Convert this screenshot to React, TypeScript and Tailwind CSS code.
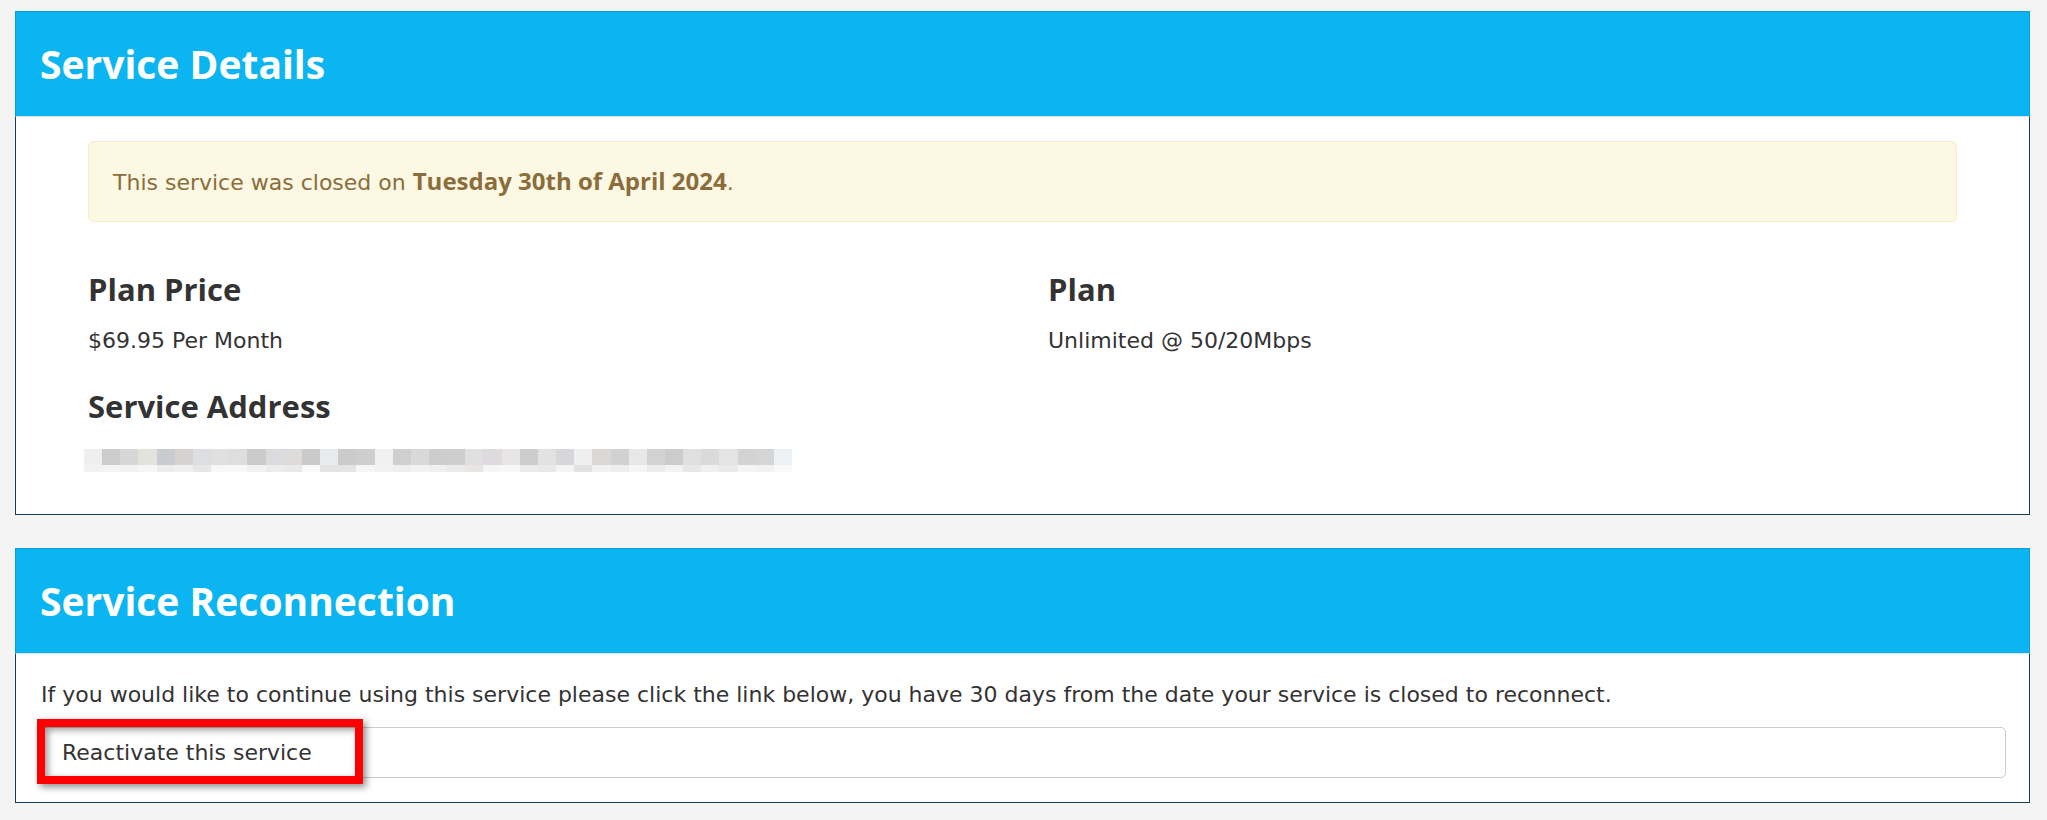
import React from 'react';

const blurTop = [
  'bg-[#efefef]', 'bg-[#cdcdcd]', 'bg-[#d6d6d6]', 'bg-[#e3e2dd]', 'bg-[#c8ccd0]', 'bg-[#d4d3d1]',
  'bg-[#dcdee1]', 'bg-[#e0e0e0]', 'bg-[#dedede]', 'bg-[#cbcbcb]', 'bg-[#d9dbdf]', 'bg-[#dedcda]',
  'bg-[#cacaca]', 'bg-[#e9eaec]', 'bg-[#cbcbcb]', 'bg-[#cecece]', 'bg-[#f0f0f0]', 'bg-[#cfcfcf]',
  'bg-[#d9d9d9]', 'bg-[#cecdce]', 'bg-[#cecece]', 'bg-[#dfe0df]', 'bg-[#dddbde]', 'bg-[#e7e6e4]',
  'bg-[#cdcdcd]', 'bg-[#e2e2e2]', 'bg-[#d7d6da]', 'bg-[#efefef]', 'bg-[#dad9d7]', 'bg-[#d1d1d1]',
  'bg-[#e8e8e8]', 'bg-[#d2d2d2]', 'bg-[#cccccc]', 'bg-[#e0e0e0]', 'bg-[#dadada]', 'bg-[#e4e4e4]',
  'bg-[#d3d3d3]', 'bg-[#d5d5d5]', 'bg-[#eef1f4]',
];

const blurBottom = [
  'bg-[#f2f2f2]', 'bg-[#f4f4f4]', 'bg-[#f3f3f3]', 'bg-[#f6f6f6]', 'bg-[#ededed]', 'bg-[#f0f0f0]',
  'bg-[#e6e6e6]', 'bg-[#f7f7f7]', 'bg-[#f8f8f8]', 'bg-[#f1f1f1]', 'bg-[#ececec]', 'bg-[#eaeaea]',
  'bg-[#f9f9f9]', 'bg-[#e3e3e3]', 'bg-[#e4e4e4]', 'bg-[#f5f5f5]', 'bg-[#f2f2f2]', 'bg-[#efefef]',
  'bg-[#f3f3f3]', 'bg-[#f0f0f0]', 'bg-[#ebebeb]', 'bg-[#e8e5e3]', 'bg-[#f4f6f8]', 'bg-[#f7f7f7]',
  'bg-[#ececec]', 'bg-[#e9e9e9]', 'bg-[#f5f5f5]', 'bg-[#e2e2e2]', 'bg-[#f1f1f1]', 'bg-[#eeeeee]',
  'bg-[#f6f6f6]', 'bg-[#ececec]', 'bg-[#f3f3f3]', 'bg-[#e7e7e7]', 'bg-[#f0f0f0]', 'bg-[#eaeaea]',
  'bg-[#f5f5f5]', 'bg-[#f2f2f2]', 'bg-[#fafafa]',
];

const heading = "font-['Open_Sans',sans-serif] font-bold";
const body = "font-['DejaVu_Sans',sans-serif]";

function PanelHeader({ title }: { title: string }) {
  return (
    <div className="flex h-[105px] items-center border border-b-0 border-[#0a9fd6] bg-[#0bb5f2] pl-[24px]">
      <h2 className={`${heading} text-[39px] leading-[44px] text-white`}>{title}</h2>
    </div>
  );
}

function AddressBlur() {
  return (
    <div className="flex w-[708px] flex-col">
      <div className="flex h-[16px]">
        {blurTop.map((c, i) => (
          <div key={i} className={`h-full flex-1 ${c}`} />
        ))}
      </div>
      <div className="flex h-[7px]">
        {blurBottom.map((c, i) => (
          <div key={i} className={`h-full flex-1 ${c}`} />
        ))}
      </div>
    </div>
  );
}

export default function App() {
  return (
    <div className={`min-h-[820px] bg-[#f4f4f4] pl-[15px] pr-[17px] pt-[11px] text-[#333333] ${body}`}>
      {/* Service details */}
      <div className="bg-white">
        <PanelHeader title="Service Details" />
        <div className="border-x border-b border-t border-x-[#173f4f] border-b-[#173f4f] border-t-[#dddddd] px-[72px] pb-[42px] pt-[24px]">
          <div className="flex h-[81px] items-center rounded-[5px] border border-[#faebcc] bg-[#fcf8e3] px-[24px] text-[22px] leading-[30px] text-[#8a6d3b]">
            <p>
              This service was closed on{' '}
              <strong className={`${heading} text-[24px]`}>Tuesday 30th of April 2024</strong>.
            </p>
          </div>

          <div className="mt-[49px] grid grid-cols-2 gap-x-[51px]">
            <div>
              <h3 className={`${heading} text-[31px] leading-[36px]`}>Plan Price</h3>
              <p className="mt-[19px] text-[22px] leading-[30px]">$69.95 Per Month</p>
            </div>
            <div>
              <h3 className={`${heading} text-[31px] leading-[36px]`}>Plan</h3>
              <p className="mt-[19px] text-[22px] leading-[30px]">Unlimited @ 50/20Mbps</p>
            </div>
          </div>

          <h3 className={`${heading} mt-[32px] text-[31px] leading-[36px]`}>Service Address</h3>
          <div className="mt-[25px] -ml-[4px]">
            <AddressBlur />
          </div>
        </div>
      </div>

      {/* Service reconnection */}
      <div className="mt-[33px] bg-white">
        <PanelHeader title="Service Reconnection" />
        <div className="border-x border-b border-t border-x-[#173f4f] border-b-[#173f4f] border-t-[#dddddd] pb-[24px] pl-[25px] pr-[23px] pt-[26px]">
          <p className="text-[22px] leading-[30px]">
            If you would like to continue using this service please click the link below, you have 30 days from the date your service is closed to reconnect.
          </p>
          <div className="relative mt-[17px] flex h-[51px] items-center rounded-[5px] border border-[#cccccc] pl-[20px] text-[22px] leading-[30px]">
            <a className="text-[#333333]">Reactivate this service</a>
            <div className="pointer-events-none absolute -left-[5px] -top-[9px] h-[65px] w-[326px] border-[8px] border-[#ff0000] shadow-[3px_3px_7px_rgba(0,0,0,0.45),inset_3px_3px_7px_rgba(0,0,0,0.4)]" />
          </div>
        </div>
      </div>
    </div>
  );
}
